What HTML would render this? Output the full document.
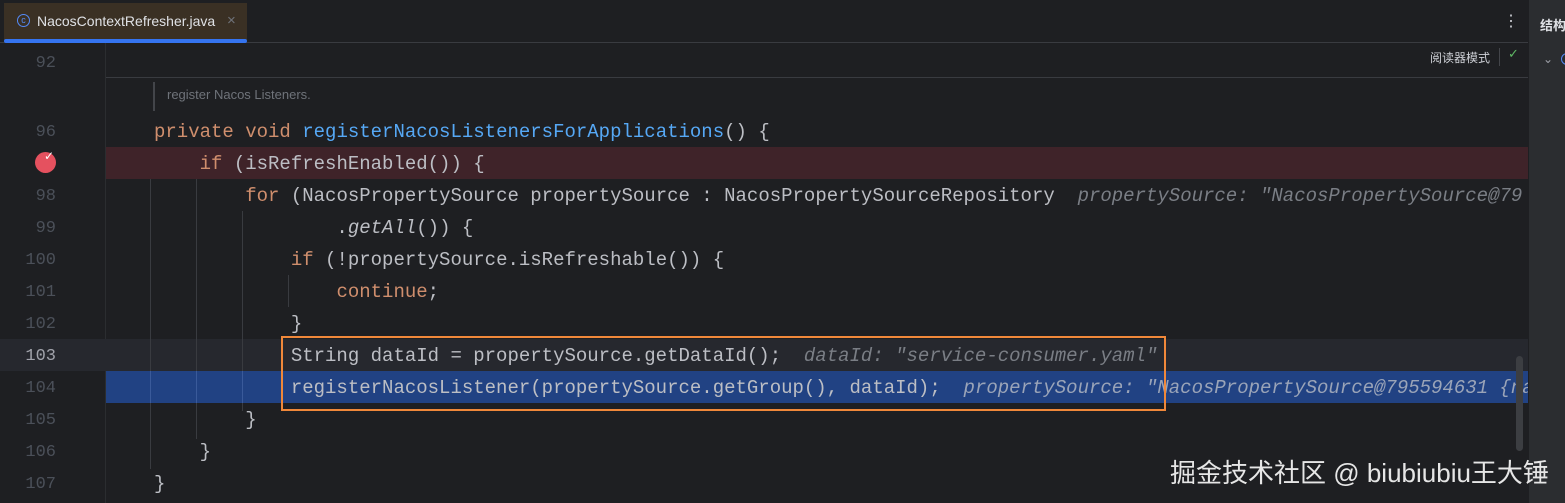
<!DOCTYPE html>
<html><head><meta charset="utf-8"><style>
body{margin:0;width:1565px;height:503px;background:#1e1f22;position:relative;overflow:hidden;font-family:"Liberation Mono",monospace}
.a{position:absolute}
.ln{position:absolute;left:0;width:56px;text-align:right;font-size:17px;color:#4b5059;line-height:32px;margin-top:2px}
.cl{position:absolute;left:154px;font-size:19px;line-height:32px;color:#bcbec4;white-space:pre;margin-top:1px}
.k{color:#cf8e6d}.m{color:#56a8f5}.i{font-style:italic}
.h{color:#7a7e85;font-style:italic}
.g{position:absolute;width:1px;background:#393b40}
</style></head><body>
<div class="a" style="left:0;top:0;width:1528px;height:42px;background:#1e1f22;border-bottom:1px solid #393b40"></div>
<div class="a" style="left:4px;top:3px;width:243px;height:37px;background:#3a3024"></div>
<div class="a" style="left:4px;top:39px;width:243px;height:4px;background:#3574f0;border-radius:2px"></div>
<div class="a" style="left:17px;top:14px;width:11px;height:11px;border:1.5px solid #548af7;border-radius:50%;color:#548af7;font:9px 'Liberation Sans';text-align:center;line-height:11px">c</div>
<div class="a" style="left:37px;top:13px;font:14px 'Liberation Sans',sans-serif;color:#dfe1e5">NacosContextRefresher.java</div>
<div class="a" style="left:227px;top:12px;font:15px 'Liberation Sans';color:#6f737a">×</div>
<div class="a" style="left:1503px;top:11px;font:16px 'Liberation Sans';color:#ced0d6">⋮</div>
<div class="a" style="left:106px;top:77px;width:1422px;height:1px;background:#393b40"></div>
<div class="a" style="left:1430px;top:49px;font:12px 'Liberation Sans','Noto Sans CJK SC',sans-serif;color:#ced0d6">阅读器模式</div>
<div class="a" style="left:1499px;top:48px;width:1px;height:18px;background:#43454a"></div>
<div class="a" style="left:1508px;top:47px;font:13px 'DejaVu Sans';color:#5fb865">✓</div>
<div class="a" style="left:1528px;top:0;width:37px;height:503px;background:#2b2d30;border-left:1px solid #1e1f22"></div>
<div class="a" style="left:1540px;top:15px;font:bold 13px 'Liberation Sans','Noto Sans CJK SC',sans-serif;color:#dfe1e5;white-space:nowrap">结构</div>
<div class="a" style="left:1543px;top:52px;font:12px 'DejaVu Sans';color:#9da0a8">⌄</div>
<div class="a" style="left:1561px;top:53px;width:10px;height:10px;border:1.5px solid #548af7;border-radius:50%"></div>
<div class="a" style="left:105px;top:43px;width:1px;height:460px;background:#2b2d30"></div>
<div class="a" style="left:106px;top:147px;width:1422px;height:32px;background:#3f2329"></div>
<div class="a" style="left:0;top:339px;width:1528px;height:32px;background:#26282e"></div>
<div class="a" style="left:106px;top:371px;width:1422px;height:32px;background:#214283"></div>
<div class="g" style="left:150px;top:179px;height:290px"></div>
<div class="g" style="left:196px;top:179px;height:260px"></div>
<div class="g" style="left:242px;top:211px;height:200px"></div>
<div class="g" style="left:288px;top:275px;height:32px"></div>
<div class="g" style="left:150px;top:371px;height:32px;background:#3a5a9a"></div>
<div class="g" style="left:196px;top:371px;height:32px;background:#3a5a9a"></div>
<div class="g" style="left:242px;top:371px;height:32px;background:#3a5a9a"></div>
<div class="a" style="left:153px;top:82px;width:2px;height:29px;background:#43454a"></div>
<div class="a" style="left:167px;top:87px;font:13px 'Liberation Sans',sans-serif;color:#6f737a">register Nacos Listeners.</div>
<div class="ln" style="top:46px">92</div>
<div class="ln" style="top:115px">96</div>
<div class="a" style="left:35px;top:152px;width:21px;height:21px;border-radius:50%;background:#e5515f"></div>
<div class="a" style="left:44px;top:149px;font:bold 12px 'DejaVu Sans';color:#fff">✓</div>
<div class="ln" style="top:179px">98</div>
<div class="ln" style="top:211px">99</div>
<div class="ln" style="top:243px">100</div>
<div class="ln" style="top:275px">101</div>
<div class="ln" style="top:307px">102</div>
<div class="ln" style="top:339px;color:#a1a3ab">103</div>
<div class="ln" style="top:371px">104</div>
<div class="ln" style="top:403px">105</div>
<div class="ln" style="top:435px">106</div>
<div class="ln" style="top:467px">107</div>
<div class="cl" style="top:115px"><span class="k">private void </span><span class="m">registerNacosListenersForApplications</span>() {</div>
<div class="cl" style="top:147px">    <span class="k">if</span> (isRefreshEnabled()) {</div>
<div class="cl" style="top:179px">        <span class="k">for</span> (NacosPropertySource propertySource : NacosPropertySourceRepository  <span class="h">propertySource: "NacosPropertySource@79</span></div>
<div class="cl" style="top:211px">                .<span class="i">getAll</span>()) {</div>
<div class="cl" style="top:243px">            <span class="k">if</span> (!propertySource.isRefreshable()) {</div>
<div class="cl" style="top:275px">                <span class="k">continue</span>;</div>
<div class="cl" style="top:307px">            }</div>
<div class="cl" style="top:339px">            String dataId = propertySource.getDataId();  <span class="h">dataId: "service-consumer.yaml"</span></div>
<div class="cl" style="top:371px;width:1374px;overflow:hidden">            registerNacosListener(propertySource.getGroup(), dataId);  <span class="h" style="color:#9aa4b8">propertySource: "NacosPropertySource@795594631 {na</span></div>
<div class="cl" style="top:403px">        }</div>
<div class="cl" style="top:435px">    }</div>
<div class="cl" style="top:467px">}</div>
<div class="a" style="left:281px;top:336px;width:881px;height:71px;border:2px solid #f0883a"></div>
<div class="a" style="left:1516px;top:356px;width:7px;height:95px;border-radius:4px;background:#3c3e42"></div>
<div class="a" style="left:1170px;top:453px;font:26px 'Liberation Sans','Noto Sans CJK SC',sans-serif;color:#e6e6e6;white-space:nowrap">掘金技术社区 @ biubiubiu王大锤</div>
</body></html>
